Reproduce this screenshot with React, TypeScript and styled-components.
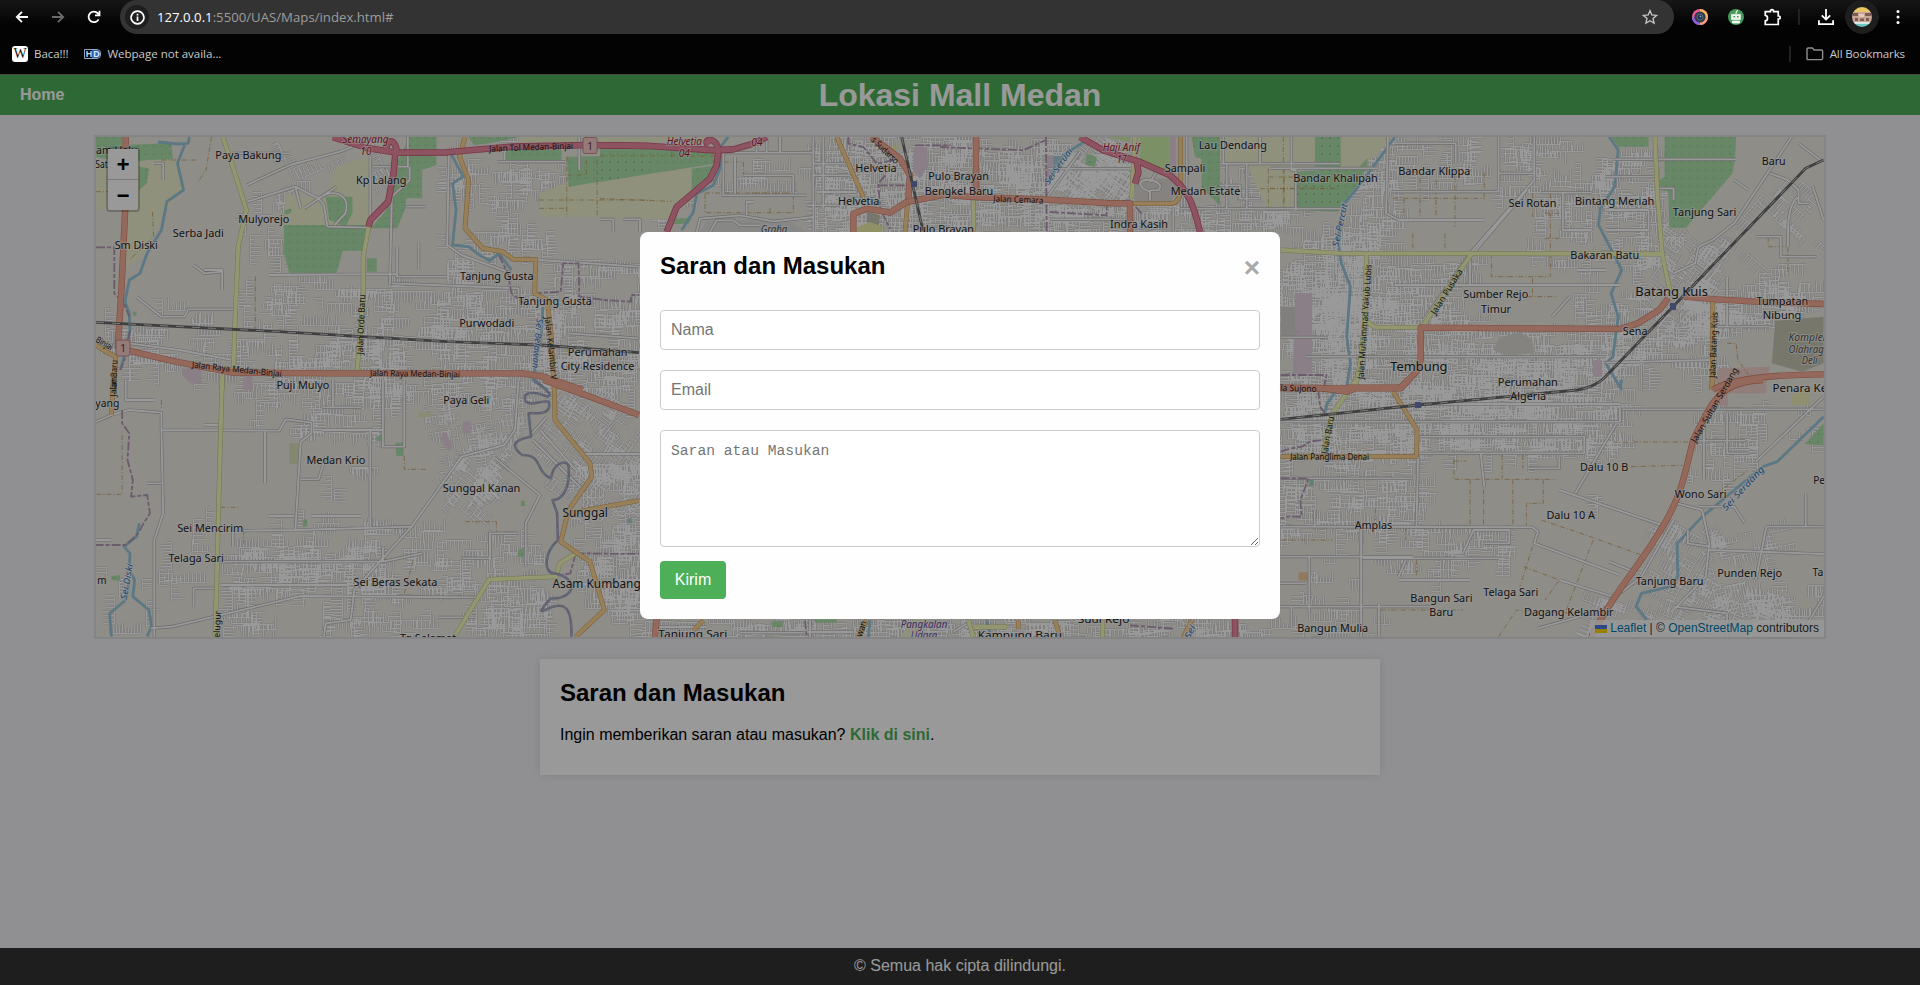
import React from "react";
import styled, { createGlobalStyle, css } from "styled-components";

const GlobalStyle = createGlobalStyle`
  *, *::before, *::after { box-sizing: border-box; }
  body {
    margin: 0;
    font-family: Arial, "Liberation Sans", sans-serif;
    background: #f1f1f4;
    overflow: hidden;
  }
`;

/* ---------- browser bar ---------- */

const Window = styled.div`
  display: flex;
  flex-direction: column;
  height: 985px;
  width: 1920px;
`;

const Chrome = styled.div`
  height: 75px;
  flex: none;
  background: linear-gradient(#161616, #030303 24px);
  border-bottom: 1px solid #48484a;
  font-family: "Open Sans", "Noto Sans", sans-serif;
`;

const Toolbar = styled.div`
  display: flex;
  height: 34px;
  padding: 0 4px;
`;

const Slot = styled.div<{ $w?: number; $round?: boolean }>`
  display: flex;
  align-items: center;
  justify-content: center;
  width: ${(p) => p.$w ?? 36}px;
  height: 34px;
  ${(p) =>
    p.$round &&
    css`
      background: radial-gradient(circle, #1e1e1e 16.5px, transparent 17px);
    `}
`;

const Omnibox = styled.div`
  display: flex;
  align-items: center;
  width: 1554px;
  height: 34px;
  margin: 0 8px;
  padding: 0 12px 0 5px;
  border-radius: 17px;
  background: #333;
`;

const InfoBadge = styled.span`
  display: flex;
  width: 24px;
  height: 24px;
  border-radius: 50%;
  align-items: center;
  justify-content: center;
  background: #1f1f1f;
`;

const Url = styled.span`
  flex: 1;
  margin-left: 8px;
  color: #9c9c9c;
  font-size: 13.2px;
  letter-spacing: 0;
  line-height: 32px;
  b { color: #fff; font-weight: 400; }
`;

const Divider = styled.i`
  width: 2px;
  height: 16px;
  background: #222;
`;

const Bookmarks = styled.div`
  display: flex;
  align-items: center;
  height: 39px;
  padding: 0 15px 0 12px;
  color: #c9c9c9;
  font-size: 11.6px;
`;

const Bookmark = styled.span<{ $gap?: number; $spacing?: number }>`
  display: flex;
  align-items: center;
  gap: 6px;
  margin-right: ${(p) => p.$gap ?? 0}px;
  letter-spacing: ${(p) => p.$spacing ?? 0}px;
  white-space: nowrap;
`;

const Grow = styled.span`
  flex: 1;
`;

const WikiIcon = styled.span`
  width: 16px;
  height: 16px;
  border-radius: 3px;
  background: #fff;
  color: #111;
  font: 14px/16px "Liberation Serif", serif;
  text-align: center;
`;

const HdIcon = styled.span`
  display: flex;
  height: 10px;
  font: bold 9px/9px "Liberation Sans", sans-serif;
  letter-spacing: 0;
  border: 1px solid #8fa9c9;
  border-radius: 0 4px 4px 0;
  b { background: #2f62b8; color: #dfeaff; width: 8px; text-align: center; border-radius: 0 4px 4px 0; }
  span { color: #cfd6e0; width: 7px; text-align: center; }
`;

/* ---------- page ---------- */

const Page = styled.div`
  position: relative;
  display: flex;
  flex-direction: column;
  flex: 1;
  background: #f1f1f4;
`;

const Header = styled.header`
  display: grid;
  grid-template-columns: 1fr auto 1fr;
  align-items: center;
  height: 40px;
  padding: 0 20px;
  background: #4eaf59;
  color: #fff;
  a { font-size: 16px; font-weight: bold; }
  h1 { margin: 0; font-size: 32px; line-height: 37px; }
`;

const MapFrame = styled.div`
  position: relative;
  width: 1732px;
  height: 504px;
  margin: 20px auto;
  border: 2px solid #dcdcdc;
  overflow: hidden;
  svg { display: block; }
`;

const ZoomControl = styled.div`
  position: absolute;
  left: 10px;
  top: 10px;
  width: 34px;
  border: 2px solid rgba(0, 0, 0, 0.22);
  border-radius: 4px;
  background-clip: padding-box;
`;

const ZoomButton = styled.div`
  height: 30px;
  background: #fff;
  color: #000;
  font: bold 22px/35px "Liberation Mono", monospace;
  text-align: center;
  border-radius: 0 0 2px 2px;
  & + & { border-top: 1px solid #ccc; height: 31px; }
`;

const Attribution = styled.div`
  position: absolute;
  right: 0;
  bottom: 0;
  display: flex;
  align-items: center;
  gap: 3px;
  height: 17px;
  padding: 0 5px;
  background: rgba(255, 255, 255, 0.8);
  font-size: 12px;
  line-height: 17px;
  color: #333;
  white-space: pre;
  a { color: #0078a8; }
`;

const Flag = styled.i`
  width: 12px;
  height: 8px;
  background: linear-gradient(#4c7be1 50%, #ffd500 50%);
`;

const Card = styled.section`
  width: 840px;
  height: 116px;
  margin: 0 auto;
  padding: 20px;
  background: #fff;
  box-shadow: 0 0 10px rgba(0, 0, 0, 0.1);
  p { margin: 20px 0 0; font-size: 16px; line-height: 18px; }
  a { color: #4eaf59; font-weight: bold; }
`;

const Heading = styled.h2`
  margin: 0;
  font-size: 24px;
  line-height: 27px;
`;

const Footer = styled.footer`
  height: 37px;
  margin-top: auto;
  background: #333;
  color: #fff;
  text-align: center;
  font-size: 16px;
  line-height: 36px;
`;

const Overlay = styled.div`
  position: absolute;
  inset: 0;
  padding-top: 157px;
  background: rgba(0, 0, 0, 0.4);
`;

const Modal = styled.div`
  display: flex;
  flex-direction: column;
  width: 640px;
  height: 387px;
  margin: 0 auto;
  padding: 20px;
  border-radius: 8px;
  background: #fefefe;
`;

const ModalTop = styled.div`
  display: flex;
  justify-content: space-between;
  height: 58px;
`;

const Close = styled.span`
  color: #aaa;
  font-size: 28px;
  font-weight: bold;
  line-height: 32px;
`;

const fieldStyle = css`
  display: block;
  width: 100%;
  padding: 10px;
  border: 1px solid #ccc;
  border-radius: 4px;
  background: #fff;
  outline: none;
  margin: 0;
  &::placeholder { color: #757575; opacity: 1; }
`;

const Field = styled.input`
  ${fieldStyle}
  height: 40px;
  margin-bottom: 20px;
  padding-bottom: 11px;
  font: 16px Arial, "Liberation Sans", sans-serif;
`;

const Message = styled.textarea`
  ${fieldStyle}
  height: 117px;
  flex: none;
  padding-top: 11px;
  font: 14.67px/19px "Liberation Mono", monospace;
  resize: vertical;
`;

const Submit = styled.button`
  width: 66px;
  height: 38px;
  margin-top: 14px;
  border: 0;
  border-radius: 4px;
  background: #4eaf59;
  color: #fff;
  font: 16px Arial, "Liberation Sans", sans-serif;
  padding: 0 0 1px;
`;

/* ---------- map ---------- */

type Kind = "white" | "trunk" | "motorway" | "primary" | "secondary" | "river" | "boundary" | "rail" | "track";

/* Each survey sheet has its own origin and scale within the map's drawing space. */
type Sheet = {
  ox: number;
  oy: number;
  sx: number;
  fills: [string, string][];
  lines: Partial<Record<Kind, string>>;
  labels: [string, number, number, number, string?][];
  roads: [string, number, number, number, number, string?][];
};

const FOREST = "#ace1aa";
const FARM = "#eef2cf";
const PINK = "#e6d3e2";

const sheets: Sheet[] = [
  {
    ox: 90, oy: 130, sx: 1 / 2.8,
    fills: [
      [FARM, "17,100 250,88 262,180 205,250 170,350 120,400 98,410 98,240 17,240"],
      [FARM, "690,110 780,80 782,290 545,285 545,190 600,205 655,200"],
      [FARM, "895,110 930,120 930,205 885,205"],
      [FARM, "1090,95 1335,95 1568,90 1568,262 1257,262 1257,190 1335,160 1335,95"],
      [FARM, "1200,21 1568,21 1568,40 1200,45"],
      [FOREST, "17,21 90,21 90,45 228,40 232,88 160,90 95,100 17,80"],
      [FOREST, "137,110 165,115 160,160 137,180"],
      [FOREST, "543,285 775,285 770,362 708,362 690,430 558,428 543,370"],
      [FOREST, "660,200 735,200 735,250 715,290 670,270"],
      [FOREST, "855,110 895,21 970,21 970,105 930,120 930,205 885,205 885,230 860,295 785,295 830,240"],
      [FOREST, "775,385 803,385 803,425 775,425"],
      [FOREST, "545,240 565,236 562,250 545,254"],
      [FOREST, "1060,21 1200,21 1120,40 1075,45"],
      [FOREST, "1165,60 1320,60 1320,95 1165,95"],
      [FOREST, "1335,80 1568,75 1568,130 1340,170"],
      [FOREST, "120,545 130,545 130,557 120,557"],
      [PINK, "258,715 312,715 312,760 280,760 258,735"],
      [PINK, "430,740 455,740 455,780 430,780"],
    ],
    lines: {
      white: "M440,215 L575,170 640,205 655,225 665,290 780,293 M440,165 L560,105 700,65 800,21 M575,170 L590,235 M600,235 L690,170 M640,205 C690,170 730,200 715,250 L685,285 M785,295 V80 M790,110 H890 V21 M840,460 L845,200 895,150 895,110 M500,435 L860,432 M845,460 L1200,475 1200,550 M130,500 L200,560 265,560 275,538 400,538 M1005,60 L1000,350 M320,420 H370 V480 M400,70 H560 M1000,345 L1040,375 1180,430 M1257,390 L1537,410 M1370,120 V20 M1140,95 H1330 M860,350 V440 H1000 M920,335 V420 M885,230 H940 M180,100 H205 V150 M110,640 L250,660 400,690 M290,405 L320,430 370,425 M1340,610 L1537,625",
      river: "M190,36 L245,42 275,40 278,21 M265,45 L245,100 262,180 215,215 200,300 160,370 140,430 110,450 98,515 110,550 112,600 100,660 85,720 M1005,60 L1030,110 1045,140 1015,160 1025,240 1015,345 1060,350 1090,375 1120,392 1145,370 1180,420 M1268,530 L1265,600 1240,750 1280,780",
      boundary: "M17,352 L68,352 68,490 95,520 110,560 M1145,375 L1170,430 1180,490 1215,520 M1240,490 L1318,485 1325,400 1368,400 1370,500 1440,510 1515,515 1515,495 1537,495 M112,600 L100,680 85,720",
      track: "M340,21 L325,120 300,160 M175,245 L178,320 110,390 M200,90 H300 M463,440 V600 M1257,210 H1568 M1335,80 V262 M1420,90 V262 M1335,135 H1390 V90 M1257,235 H1335 M17,185 H60",
      secondary: "M372,21 L400,110 438,240 415,350 405,600 402,715 M370,735 V780 M780,290 L765,380 765,500 748,720",
      primary: "M1050,21 L1035,80 1060,150 1050,295 1100,355 1155,365 1185,388 1248,388 1245,490 1280,510 1290,600 1300,780 M17,645 L45,665 72,680 65,780",
      trunk: "M100,21 L98,250 88,480 78,650 120,665 200,685 240,695 400,728 700,730 1210,730 1270,740 1380,780",
      motorway: "M680,21 L780,55 860,68 1000,67 1180,50 1400,45 1568,48 M855,70 L850,130 835,215 785,270 780,290 M830,70 C825,25 855,20 860,68",
      rail: "M17,577 L530,605 1000,635 1260,645 1537,668",
    },
    labels: [
      ["am Helu", 17, 133, 73], ["Sat", 15, 50, 115],
      ["Paya Bakung", 351, 536, 87], ["Kp Lalang", 745, 886, 162], ["Mulyorejo", 415, 558, 278],
      ["Serba Jadi", 232, 375, 320], ["Sm Diski", 69, 190, 356], ["Tanjung Gusta", 1036, 1242, 451],
      ["Tanjung Gusta", 1199, 1405, 524], ["Purwodadi", 1034, 1188, 590], ["Perumahan", 1338, 1505, 677],
      ["City Residence", 1318, 1524, 720], ["Puji Mulyo", 522, 670, 776],
      ["Semayang", 706, 836, 38, "exit"], ["10", 757, 788, 74, "exit"],
    ],
    roads: [
      ["Jalan Tol Medan-Binjai", 1235, 52, -2, 84], ["Jalan Orde Baru", 759, 583, -88, 60],
      ["Jalan Raya Medan-Binjai", 411, 718, 6, 90], ["Jalan Raya Medan-Binjai", 910, 731, 1, 90],
      ["Jalan Kelambir V", 1291, 655, 84, 63], ["Sei Belawan", 1253, 640, 95, 50, "water"],
      ["Binjai", 40, 640, 30, 18], ["lan Baru", 67, 735, -88, 30],
    ],
  },
  {
    ox: 90, oy: 380, sx: 1 / 2.8,
    fills: [
      [FOREST, "802,168 816,168 816,183 802,183"], [FOREST, "855,188 878,188 878,228 858,228"],
      [FOREST, "596,418 608,418 608,440 596,440"], [FOREST, "1198,512 1218,500 1218,532 1198,530"],
      [FOREST, "60,588 84,586 84,602 60,600"], [FOREST, "1207,362 1218,362 1218,378 1207,378"],
      ["#dce3bb", "558,190 584,190 584,252 558,252"], ["#e4e8c4", "918,95 955,95 955,112 918,112"],
      [PINK, "985,155 1000,160 1015,200 1005,215 985,185"], [PINK, "1045,125 1066,125 1066,160 1045,160"],
      ["#a8cfd6", "1505,415 1517,415 1517,430 1505,430"],
    ],
    lines: {
      white: "M17,125 L60,105 110,90 200,98 200,150 530,152 548,118 620,128 620,160 590,185 575,450 M430,452 L575,450 900,440 1040,230 1160,195 1190,150 1200,0 M1135,235 L1260,345 1220,430 1220,560 M900,440 L740,630 730,720 660,730 655,770 M170,745 L230,740 590,648 1080,652 M200,150 L205,400 180,480 180,770 M490,155 V310 M820,0 V200 H880 V0 M785,150 V440 M650,150 H820 M365,545 H820 M365,615 H720 M1380,222 H1537 M650,82 H760 M0,480 H60 M100,0 V60 H180 M590,298 H640 L660,230 M500,408 H570 M620,408 H760 M680,80 V0 M400,450 V500 M290,680 V625 H350 M820,500 V545 L930,520 M975,712 H1080 M1040,535 H1120 M1120,540 V460 H1200 M1240,180 L1380,330 M1260,150 L1360,270 M1230,170 L1280,110 M160,310 H200 M320,135 H360",
      river: "M138,430 L130,470 95,500 112,520 110,570 125,600 120,650 165,690 172,740 160,770 M110,600 L100,660 55,700 60,770",
      boundary: "M90,90 L90,130 110,160 105,240 120,300 115,350 160,345 168,400 150,430 135,460 100,495 17,495 M1360,520 L1537,522 M1360,520 L1345,580 1320,585",
      track: "M90,165 V343 H17 M365,382 H415 M430,450 V490 M880,228 V268 H945 M1050,425 H1138 V460 M905,540 L880,640 M200,60 V90",
      secondary: "M370,0 L362,300 355,600 350,770 M1020,770 L1118,598 1305,590 1315,550 1360,520",
      primary: "M1300,0 L1302,120 1400,250 1405,290 1340,390 1318,485 1400,545 1440,690 1390,740 1360,770 M1345,400 L1400,388 1537,362 M65,0 L60,105",
      trunk: "M1270,0 L1400,50 1537,105",
    },
    labels: [
      ["yang", 15, 82, 82], ["Paya Geli", 989, 1118, 71], ["Medan Krio", 606, 771, 253],
      ["Sunggal Kanan", 988, 1205, 336], ["Sunggal", 1323, 1450, 412, "town"], ["Sei Mencirim", 244, 429, 455],
      ["Telaga Sari", 220, 375, 545], ["Sei Beras Sekata", 738, 973, 619], ["Asam Kumbang", 1295, 1542, 625, "town"],
      ["Tg Selamat", 868, 1025, 785], ["m", 20, 46, 611],
    ],
    roads: [["Jalan", 66, 20, -88, 20], ["Selugur", 356, 740, -88, 32], ["Sei Diski", 103, 605, -80, 36, "water"]],
  },
  {
    ox: 1270, oy: 130, sx: 1 / 2.8,
    fills: [
      [FARM, "0,21 60,21 60,110 72,115 72,240 0,235"], [FARM, "198,21 345,21 290,80 250,110 198,110"],
      [FOREST, "125,21 198,21 198,110 125,110"], [FOREST, "72,125 270,115 245,165 188,245 72,240"], [FOREST, "250,110 273,85 273,110"],
      [FOREST, "955,21 1060,21 1060,50 975,50"],
      [FOREST, "1105,21 1305,21 1302,90 1295,130 1165,293 1118,293 1115,185 1090,180 1090,150 1105,140"],
      [PINK, "70,490 118,490 118,730 65,735"], ["#d8d4d2", "30,530 70,530 70,600 85,600 65,622 30,622"],
      ["#c9c7b3", "1415,572 1550,560 1550,700 1490,725 1405,700"], ["#f2d0cb", "1255,715 1400,710 1390,750 1255,770"],
      [PINK, "905,690 930,690 930,740 905,740"], ["#dedad6", "640,625 700,605 735,630 740,670 660,678 625,660"],
    ],
    lines: {
      white: "M1460,21 L1300,280 1240,330 1200,350 1190,400 1130,430 M740,21 V150 L560,370 430,570 M720,180 L545,400 M0,115 H300 M330,21 L325,250 360,270 600,270 M965,88 H1305 M940,698 L1230,690 M100,680 H940 M30,622 H160 M350,40 H520 V100 M340,185 H640 V21 M640,130 H740 M820,190 V300 H900 M760,188 H900 M1090,175 H1130 V210 M1400,130 L1450,150 1480,180 M1480,180 V220 H1510 M1360,320 H1430 V380 H1530 M1480,200 C1450,220 1450,280 1450,350 M350,465 H980 M560,370 V465 M1040,690 V780 M790,560 L840,500 M60,21 V120 H72 V240 M1260,590 H1400 M1280,440 V590 M1480,40 L1540,90 M1520,170 L1550,270 M1340,180 L1300,150 M940,140 H1070 M940,240 H1060 V300 H940 M860,420 H940",
      river: "M350,21 L310,80 240,180 205,225 190,330 200,400 225,470 215,620 225,700 215,770 M950,21 L975,60 965,170 925,235 920,285 985,420 955,490 975,560 960,680 940,700 985,780",
      track: "M345,205 H600 M375,205 V265 M420,145 V260 M465,150 V260 M518,135 V290 M600,128 V210 M735,190 V260 M785,190 V440 M620,370 V440 H780 M490,310 V360 M400,310 V360 M735,445 V500 M0,175 H180 M40,110 V235 M720,500 H805 M770,250 H810 M770,325 H810 M1280,640 H1305 L1310,690 1340,735 M1395,320 V350 H1450 V440",
      boundary: "M30,735 H158 L150,780",
      secondary: "M30,360 L200,370 560,370 1095,372 M270,370 L265,570 295,592 425,592 565,370 M265,570 L255,680 240,770 M1078,21 L1085,200 1098,370 1120,485",
      primary: "M1240,510 L1238,780",
      trunk: "M30,775 H215 M215,773 H365 L410,725 422,690 422,593 980,597 1030,580 1090,540 1115,505 M1160,500 L1250,508 1360,515 1550,522 M1240,780 Q1300,735 1550,733",
      rail: "M1550,90 L1500,115 1128,530 935,745",
    },
    labels: [
      ["Bandar Khalipah", 65, 302, 156], ["Bandar Klippa", 359, 561, 136], ["Sei Rotan", 668, 802, 231],
      ["Bintang Meriah", 854, 1076, 225], ["Tanjung Sari", 1128, 1306, 257], ["Baru", 1377, 1444, 104],
      ["Bakaran Batu", 841, 1034, 386], ["Batang Kuis", 1023, 1226, 499, "town"], ["Sumber Rejo", 541, 723, 505],
      ["Timur", 591, 675, 548], ["Tumpatan", 1362, 1507, 525], ["Nibung", 1380, 1488, 568], ["Sena", 988, 1057, 614],
      ["Tembung", 337, 497, 722, "town"], ["Perumahan", 638, 806, 768],
      ["Komplek", 1452, 1562, 632, "area"], ["Olahraga", 1452, 1566, 668, "area"], ["Deli", 1489, 1533, 702, "area"],
    ],
    roads: [
      ["Sei Percut", 196, 285, -78, 44, "water"], ["Jalan Muhammad Yakub Lubis", 265, 575, -86, 115],
      ["Jalan Pusaka", 495, 485, -58, 52], ["Jalan Batang Kuis", 1242, 645, -88, 66],
    ],
  },
  {
    ox: 1270, oy: 380, sx: 1 / 2.8,
    fills: [
      [FOREST, "1497,192 1550,130 1550,196"], ["#f2d0cb", "1255,0 1390,0 1390,40 1282,40 1282,78 1250,75"],
      ["#f0efb9", "1460,55 1480,25 1510,25 1508,76 1460,74"], ["#f3c999", "80,577 107,577 107,601 80,601"],
      ["#9ed8bb", "110,300 122,300 122,318 110,318"],
    ],
    lines: {
      white: "M415,220 L410,440 M30,125 H980 V85 M985,88 H1550 M410,72 H980 M30,440 L735,442 750,455 740,490 980,585 M255,440 V770 M810,330 L1110,440 M855,340 L970,130 M1140,370 L1210,390 1230,490 1220,590 1130,690 M1230,510 L1550,522 M1360,245 L1550,50 M1390,440 H1550 M30,530 H400 M260,535 H640 M360,600 H560 M0,680 H450 M1215,100 V300 M1200,182 H1330 M1130,420 L1040,590 980,640 M1280,100 V220 H1340 M415,170 H880 V220 H415 M590,220 L600,320 M720,265 H810 V230 M30,295 H400 M125,390 V440 M540,520 L570,450 H670 V490 H600 M1170,450 V490 L1230,500 M1200,380 H1300 L1330,430 M1500,340 V440 M1390,440 L1360,600 M1130,680 L1280,700 M1280,700 V770 M1550,650 L1500,740 M0,610 H100 M110,530 V700 M305,670 V770 M810,600 L960,650 M60,680 V740 M380,540 L360,590 M950,545 L1030,580 M750,745 L900,700",
      river: "M985,0 L980,25 M1550,110 L1420,245 1380,260 1210,410 1140,490 1142,590 1120,620 1040,640 1025,680 1055,720 M155,95 L160,70 180,40 210,30",
      boundary: "M135,30 L140,80 155,100 M30,215 L60,205 90,200 110,185 145,180 M30,295 H108 L85,360 88,410 50,410 30,415",
      track: "M515,240 V298 H800 M560,298 V436 M598,298 V436 M680,298 V436 M765,298 V370 H718 V436 M650,225 V295 M708,225 V265 M515,243 H550 M960,186 H1175 M1010,260 L1155,256 M760,420 L870,460 1040,525 M735,500 L700,620 M905,480 L830,690 M710,560 L810,600 770,660 M640,770 L690,690 850,700 M310,690 H540 M30,480 H175 M410,540 V590 M1250,340 L1340,270 M295,385 V420 M380,440 V480",
      secondary: "M240,0 L215,40 175,100 150,215",
      primary: "M345,35 L412,150 410,230 30,230 M1240,0 L1235,30",
      trunk: "M0,22 L140,24 215,35 240,25 365,25 390,0 M1380,0 C1260,5 1240,60 1185,180 C1160,290 1150,340 1120,400 C1060,530 970,620 900,770",
      rail: "M30,118 L415,75 860,30 C890,25 915,15 935,-5",
    },
    labels: [
      ["Algeria", 673, 773, 61], ["Penara Keb", 1407, 1580, 36], ["Dalu 10 B", 868, 1003, 272], ["Wono Sari", 1133, 1278, 355],
      ["Dalu 10 A", 774, 910, 416], ["Amplas", 237, 342, 446], ["Punden Rejo", 1252, 1434, 591], ["Tanjung Baru", 1024, 1214, 615],
      ["Telaga Sari", 597, 751, 647], ["Bangun Sari", 393, 567, 665], ["Baru", 446, 513, 707], ["Dagang Kelambir", 711, 962, 709],
      ["Bangun Mulia", 76, 275, 756], ["Pe", 1521, 1554, 313], ["Ta", 1519, 1549, 587],
    ],
    roads: [
      ["la Sujono", 80, 25, 2, 36], ["Jalan Baru", 162, 165, -80, 38], ["Jalan Panglima Denai", 167, 231, 0, 79],
      ["Jalan Sultan Serdang", 1245, 75, -60, 85], ["Sei Serdang", 1325, 325, -47, 57, "water"],
    ],
  },
  {
    ox: 600, oy: 132, sx: 1 / 3,
    fills: [
      [FARM, "0,15 380,15 330,30 0,30"], [FARM, "0,60 275,100 290,190 215,262 0,262"], [FARM, "370,15 390,15 372,50"],
      [FOREST, "0,50 200,48 340,60 345,95 150,125 0,150"], [FOREST, "275,110 345,100 320,150 275,195"], [FOREST, "215,260 275,258 265,276 205,276"],
      ["#eeebe3", "315,180 580,185 580,242 315,242"], ["#e2e3e0", "320,265 560,262 620,300 300,300"],
      ["#c8c6b8", "800,238 840,250 835,290 800,270"], ["#eef0aa", "770,285 810,270 850,285 845,300 770,300"],
      [PINK, "940,45 980,45 985,100 960,140 940,120"], ["#eef0aa", "865,45 900,40 885,55"],
    ],
    lines: {
      white: "M370,62 V190 H620 M430,130 H580 V185 M370,62 H640 M405,75 V185 M500,62 V20 M540,60 V15 M470,60 V20 M290,300 L300,260 420,250 520,268 640,255 M440,250 V210 H460 M330,300 L350,265 400,265 420,280 480,280 M640,15 V300 M670,15 V230 M620,220 H720 M640,130 H750 M640,95 H745 M650,180 H770 M0,262 H40 V300 M70,262 H120 V300",
      river: "M385,15 L365,40 360,110 340,160 290,185 280,240 245,295 M540,278 L530,300",
      track: "M0,72 H360 M215,30 V80 M370,90 V180 M370,90 H430 V130 M315,183 H580 V242 H315 Z M455,183 H575 M0,200 L215,208 M510,242 V225",
      boundary: "M745,15 L745,35 790,45 815,75 830,95 880,85 M855,130 L835,155 840,220 845,240 M835,160 H925 M845,240 L870,290 M945,40 H1050",
      primary: "M710,15 L790,195 M915,300 L925,190",
      trunk: "M815,15 L900,80 930,130 925,200 M760,300 V245 L800,230 870,242 920,210 1050,185",
      motorway: "M0,40 L150,42 345,55 400,52 460,35 500,15 M355,55 L350,100 330,140 230,225 200,300 M355,55 C350,12 305,20 325,40",
      rail: "M905,15 L970,300",
    },
    labels: [
      ["Helvetia", 200, 306, 38, "exit"], ["04", 236, 270, 74, "exit"], ["04", 454, 488, 43, "exit"],
      ["Helvetia", 766, 890, 120], ["Helvetia", 714, 838, 220], ["Pulo Brayan", 985, 1167, 145], ["Bengkel Baru", 974, 1180, 188],
      ["Pulo Brayan", 938, 1122, 302], ["Graha", 482, 562, 302, "area"],
    ],
    roads: [["s Sudarso", 855, 55, 44, 34]],
  },
  {
    ox: 940, oy: 132, sx: 1 / 3,
    fills: [
      [FARM, "840,15 1125,15 1125,100 1070,110 1070,235 980,225 920,100 840,95"],
      ["#cdf0a8", "600,15 690,15 690,122 600,85"], ["#cdf0a8", "500,15 570,15 570,30"],
      [PINK, "690,15 708,15 708,130 690,120"], [PINK, "320,70 342,70 342,115 320,150"],
      ["#a8cfd6", "340,72 370,72 345,108 340,105"], [FOREST, "440,65 470,75 465,105 435,98"],
      [FOREST, "755,15 840,15 840,220 785,170 785,80 765,75"], [FOREST, "1125,15 1200,15 1200,110 1125,100"],
      [FOREST, "1070,120 1200,110 1200,235 1070,235"], ["#ded9d5", "585,140 690,140 720,170 690,208 585,208"],
    ],
    lines: {
      white: "M630,205 V175 H655 C680,150 610,130 600,155 L610,170 630,180 M650,120 L630,150 M325,110 H570 M325,190 L420,60 M440,110 H570 M840,95 H1200 M860,95 V230 M960,95 V15 M840,160 H900 V200 H960 M330,262 H560 M700,225 V300 M720,230 H1200 M560,60 H470 M740,15 V180 M850,15 V95 M920,95 V230",
      river: "M440,25 L400,50 370,70 325,150",
      track: "M985,110 V225 M1030,110 V230 M985,135 H1070 M960,170 H1200 M1030,15 V110",
      boundary: "M0,45 L250,55 315,25 M318,15 L320,300 M330,240 L500,250 500,210 570,205 605,245",
      secondary: "M585,15 L575,200 M100,200 V300",
      primary: "M722,15 V180 Q715,215 690,215 H580",
      trunk: "M108,15 V190 M0,188 L100,195 320,203 500,213 570,215 V300",
      motorway: "M420,15 L490,55 600,90 690,130 C740,170 760,210 780,300 M590,85 L595,120 585,155",
    },
    labels: [
      ["Lau Dendang", 776, 981, 52], ["Sampali", 674, 796, 119], ["Medan Estate", 692, 901, 190], ["Indra Kasih", 510, 684, 288],
      ["Haji Anif", 488, 600, 58, "exit"], ["17", 530, 560, 93, "exit"],
    ],
    roads: [["Jalan Cemara", 235, 203, 2, 50], ["Sei Seruai", 355, 103, -55, 42, "water"]],
  },
  {
    ox: 640, oy: 612, sx: 1 / 3,
    fills: [[FOREST, "395,28 428,28 428,45 395,45"], [FOREST, "525,22 590,22 590,32 525,32"], [FARM, "780,75 820,22 870,22 830,75"]],
    lines: {
      white: "M500,60 H640 M300,62 H490 M940,60 L980,35 M510,25 V75 M60,45 H200",
      boundary: "M495,25 L500,75 M1470,40 L1600,50",
      secondary: "M985,25 L1000,75 M1000,45 H1100 M1388,25 V75",
      primary: "M190,25 L160,55 M680,25 L655,75 M1135,25 V50 M1245,25 L1260,75 M1655,25 L1630,75",
      trunk: "M50,20 L45,75",
      motorway: "M1785,20 V75",
      river: "M690,25 L685,75 M1040,25 L1050,60",
    },
    labels: [
      ["Tanjung Sari", 55, 262, 77], ["Kampung Baru", 1013, 1266, 80], ["Sudi Rejo", 1313, 1468, 34],
      ["Pangkalan", 782, 922, 47, "air"], ["Udara", 812, 892, 80, "air"],
    ],
    roads: [["wan", 664, 50, -72, 16], ["Sei", 1650, 60, -65, 14, "water"]],
  },
];

/* Small residential streets: spines with perpendicular side streets. */
const districts: [number, number, number, number, number, number?][] = [
  [98, 290, 130, 85, 18], [125, 320, 100, 60, 16], [230, 285, 170, 115, 90], [350, 285, 200, 115, 110], [430, 290, 225, 100, 90],
  [245, 180, 60, 110, 16], [270, 140, 110, 60, 16, -25], [440, 150, 40, 130, 30], [490, 165, 60, 90, 32], [475, 135, 90, 60, 14],
  [545, 260, 95, 120, 60], [250, 380, 140, 50, 30], [295, 420, 60, 70, 9], [420, 390, 100, 70, 34, -8], [440, 455, 50, 60, 30, -50],
  [220, 545, 145, 45, 80], [350, 525, 120, 70, 40], [460, 530, 80, 100, 36], [540, 390, 100, 120, 66, 35], [570, 460, 70, 160, 90],
  [100, 560, 80, 75, 10], [160, 500, 60, 60, 4], [200, 600, 60, 35, 8], [320, 595, 110, 40, 18], [480, 600, 70, 35, 26],
  [280, 510, 90, 30, 10], [330, 560, 60, 30, 9],
  [640, 137, 170, 95, 22], [813, 137, 140, 95, 170], [940, 137, 110, 95, 120], [1050, 150, 80, 55, 80, -55], [1040, 205, 150, 27, 56],
  [1190, 205, 90, 30, 20], [1200, 137, 130, 90, 28], [1280, 235, 85, 150, 150], [1340, 137, 50, 120, 60], [1370, 137, 170, 50, 40],
  [1280, 255, 70, 60, 40], [1365, 260, 100, 80, 70], [1420, 330, 200, 50, 80], [1310, 290, 90, 100, 80],
  [1400, 345, 210, 50, 80], [1280, 385, 130, 70, 120], [1400, 385, 215, 66, 200], [1280, 460, 140, 75, 75], [1360, 520, 100, 60, 22],
  [1450, 525, 60, 30, 14], [1290, 560, 90, 75, 14], [1490, 137, 130, 70, 34], [1520, 190, 100, 80, 26], [1600, 137, 60, 180, 50],
  [1655, 220, 70, 110, 60, 35], [1690, 280, 110, 40, 40], [1720, 180, 100, 80, 14, 40], [1750, 260, 70, 60, 20], [1560, 290, 70, 90, 30],
  [1605, 320, 100, 50, 30], [1670, 300, 50, 80, 24], [1680, 400, 60, 80, 18], [1730, 400, 90, 50, 14], [1640, 520, 70, 80, 30, 28],
  [1700, 530, 70, 90, 40, -12], [1660, 590, 120, 40, 18, 20], [1580, 590, 90, 40, 14, 20], [1740, 580, 80, 55, 14], [1590, 440, 25, 60, 4],
  [642, 618, 600, 20, 130], [1240, 620, 90, 17, 8],
];

function buildStreets(): string {
  let seed = 48271;
  const rnd = () => {
    seed = (seed * 16807) % 2147483647;
    return seed / 2147483647;
  };
  const out: string[] = [];
  for (const [x, y, w, h, count, angle = 0] of districts) {
    const a = (angle * Math.PI) / 180;
    for (let i = 0; i < count; i++) {
      const px = Math.round(x + rnd() * w) + 0.5;
      const py = Math.round(y + rnd() * h) + 0.5;
      const flip = rnd() < 0.4 ? Math.PI / 2 : 0;
      const ux = Math.cos(a + flip);
      const uy = Math.sin(a + flip);
      const len = 9 + Math.round(rnd() * 22);
      const side = rnd() < 0.5 ? 1 : -1;
      out.push(`M${px},${py}l${(ux * len).toFixed(1)},${(uy * len).toFixed(1)}`);
      const step = 3 + Math.round(rnd() * 2);
      for (let t = 0; t <= len; t += step) {
        const tooth = (4 + Math.round(rnd() * 9)) * side;
        out.push(`M${(px + ux * t).toFixed(1)},${(py + uy * t).toFixed(1)}l${(-uy * tooth).toFixed(1)},${(ux * tooth).toFixed(1)}`);
      }
    }
  }
  return out.join("");
}

const streets = buildStreets();

const strokes: Record<Kind, { casing?: string; wide?: number; color: string; width: number; dash?: string }> = {
  river: { color: "#98c9dc", width: 2.8 },
  track: { color: "#c4a060", width: 0.8, dash: "5 2 1 2" },
  white: { casing: "#b4b2b2", wide: 3.2, color: "#ffffff", width: 1.9 },
  boundary: { color: "#b398b4", width: 1.8, dash: "9 2 4 2" },
  secondary: { casing: "#bcc28a", wide: 4.8, color: "#f6fbb8", width: 3.8 },
  primary: { casing: "#c79d5c", wide: 4.8, color: "#fcd495", width: 3.8 },
  trunk: { casing: "#cf7f68", wide: 6.4, color: "#f9ae99", width: 5.2 },
  motorway: { casing: "#c95a78", wide: 6.6, color: "#ec8ba0", width: 5 },
  rail: { casing: "#6a6a6a", wide: 2.8, color: "#c9c9c9", width: 1, dash: "8 8" },
};

const order: Kind[] = ["river", "track", "white", "boundary", "secondary", "primary", "trunk", "motorway", "rail"];

const MapText = styled.text<{ $kind?: string }>`
  font-family: "Noto Sans", sans-serif;
  font-size: ${(p) => (p.$kind === "town" ? 12.6 : p.$kind === "road" || p.$kind === "water" ? 8.8 : 11.4)}px;
  font-style: ${(p) => (["exit", "area", "air", "water"].includes(p.$kind ?? "") ? "italic" : "normal")};
  fill: ${(p) => ({ exit: "#a8202c", water: "#3a76b8", air: "#6c4a9c", area: "#555" } as Record<string, string>)[p.$kind ?? ""] ?? "#222"};
  stroke: ${(p) => (p.$kind === "road" ? "none" : "rgba(255,255,255,0.6)")};
  stroke-width: 2px;
  stroke-linejoin: round;
  paint-order: stroke;
`;

const Shield = ({ x, y }: { x: number; y: number }) => (
  <g>
    <rect x={x - 7} y={y - 8} width={14} height={16} rx={2} fill="#f6cdca" stroke="#c78a88" />
    <text x={x} y={y + 4} textAnchor="middle" fontSize={10} fontFamily="Noto Sans" fill="#6b2a2a">1</text>
  </g>
);

const CityMap = () => (
  <svg width={1728} height={500} viewBox="96 137 1728 500">
    <defs>
      <pattern id="trees" width="8" height="8" patternUnits="userSpaceOnUse">
        <circle cx="2" cy="2" r="0.55" fill="#6f9f6e" />
      </pattern>
    </defs>
    <rect x={96} y={137} width={1728} height={500} fill="#eeebe3" />
    <path d={streets} fill="none" stroke="#c4c2c0" strokeWidth={2.2} />
    <path d={streets} fill="none" stroke="#ffffff" strokeWidth={1.25} />
    {sheets.map((s, i) => (
      <g key={i} transform={`translate(${s.ox} ${s.oy}) scale(${s.sx} ${1 / 3})`}>
        {s.fills.map(([fill, points], j) => (
          <polygon key={j} points={points} fill={fill} />
        ))}
      </g>
    ))}
    {sheets.map((s, i) =>
      s.fills
        .filter(([fill]) => fill === FOREST)
        .map(([, points], j) => (
          <polygon
            key={`${i}-${j}`}
            fill="url(#trees)"
            points={points
              .split(" ")
              .map((p) => {
                const [x, y] = p.split(",").map(Number);
                return `${s.ox + x * s.sx},${s.oy + y / 3}`;
              })
              .join(" ")}
          />
        ))
    )}
    <g fill="none" strokeLinejoin="round">
      {order.map((kind) => {
        const st = strokes[kind];
        return (
          <g key={kind}>
            {[0, 1].map((pass) =>
              pass === 0 && !st.casing
                ? null
                : sheets.map((s, i) => (
                    <g key={`${pass}-${i}`} transform={`translate(${s.ox} ${s.oy}) scale(${s.sx} ${1 / 3})`}>
                      <path
                        d={s.lines[kind] ?? ""}
                        vectorEffect="non-scaling-stroke"
                        stroke={pass ? st.color : st.casing}
                        strokeWidth={pass ? st.width : st.wide}
                        strokeDasharray={pass ? st.dash : undefined}
                      />
                    </g>
                  ))
            )}
          </g>
        );
      })}
      <g transform={`translate(90 380) scale(${1 / 2.8} ${1 / 3})`}>
        {["#a3a0bd", "#9dbdcf"].map((c, i) => (
          <path
            key={c}
            vectorEffect="non-scaling-stroke"
            stroke={c}
            strokeWidth={i ? 1.2 : 2.6}
            strokeDasharray={i ? "4 6" : undefined}
            d="M1245,0 C1275,30 1300,45 1280,50 C1225,25 1210,45 1220,65 C1240,80 1260,60 1285,65 C1295,115 1230,95 1228,100 L1235,170 C1180,180 1180,200 1210,225 C1270,225 1245,275 1290,295 C1300,240 1340,240 1340,260 C1345,320 1325,360 1295,360 L1308,400 1310,480 C1270,520 1270,580 1300,580 C1380,600 1350,660 1290,655 C1260,690 1260,700 1275,690 C1330,660 1350,680 1348,770"
          />
        ))}
      </g>
    </g>
    <path d="M911,181h6v6h-6z M1670,303h6v7h-6z M1415,402h6v6h-6z" fill="#6f78b5" />
    {sheets.map((s, i) => (
      <g key={i}>
        {s.roads.map(([text, x, y, angle, length, kind], j) => (
          <MapText
            key={j}
            $kind={kind ?? "road"}
            textAnchor="middle"
            textLength={length}
            lengthAdjust="spacingAndGlyphs"
            transform={`translate(${s.ox + x * s.sx} ${s.oy + y / 3}) rotate(${angle})`}
            dy={3}
          >
            {text}
          </MapText>
        ))}
        {s.labels.map(([text, x0, x1, y, kind], j) => (
          <MapText
            key={j}
            $kind={kind}
            x={s.ox + x0 * s.sx}
            y={s.oy + y / 3}
            textLength={(x1 - x0) * s.sx}
            lengthAdjust="spacingAndGlyphs"
          >
            {text}
          </MapText>
        ))}
      </g>
    ))}
    <Shield x={590} y={145.5} />
    <Shield x={123} y={348} />
  </svg>
);

/* ---------- toolbar icons ---------- */

const Glyph = ({ d, color = "#fff", size = 16, width = 1.8 }: { d: string; color?: string; size?: number; width?: number }) => (
  <svg width={size} height={size} viewBox="0 0 16 16" fill="none" stroke={color} strokeWidth={width} overflow="visible">
    <path d={d} />
  </svg>
);

const BrowserChrome = () => (
  <Chrome>
    <Toolbar>
      <Slot><Glyph d="M14 8H3M8 2.8L2.8 8L8 13.2" /></Slot>
      <Slot><Glyph color="#6c6c6c" d="M2 8H13M8 2.8L13.2 8L8 13.2" /></Slot>
      <Slot><Glyph d="M12.6 10.3A5.3 5.3 0 1 1 11.9 4.4L13.3 6M13.5 1.8V6.4H9" /></Slot>
      <Omnibox>
        <InfoBadge><Glyph size={15} d="M8 1.2a6.8 6.8 0 1 0 .01 0M8 7v4.8M8 4.1v1.8" /></InfoBadge>
        <Url><b>127.0.0.1</b>:5500/UAS/Maps/index.html#</Url>
        <Slot $w={24}>
          <Glyph color="#c7c7c7" width={1.3} d="M8 1.6L9.8 6L14.6 6.4L11 9.5L12.1 14.2L8 11.7L3.9 14.2L5 9.5L1.4 6.4L6.2 6Z" />
        </Slot>
      </Omnibox>
      <Slot>
        <svg width="16" height="16" viewBox="0 0 16 16">
          <circle cx="8" cy="8" r="8" fill="#e85a96" />
          <path d="M8 0a8 8 0 0 1 8 8H8z" fill="#f7b45e" />
          <path d="M16 8a8 8 0 0 1-8 8V8z" fill="#f5a07a" />
          <path d="M8 16a8 8 0 0 1-8-8h8z" fill="#8a63e8" />
          <circle cx="8" cy="8" r="5.6" fill="#343b46" />
          <circle cx="8" cy="8" r="3" fill="#1d2f49" stroke="#5b6a80" />
          <circle cx="8.5" cy="7.5" r="1" fill="#6fa8dc" />
        </svg>
      </Slot>
      <Slot>
        <svg width="16" height="16" viewBox="0 0 16 16">
          <circle cx="8" cy="8" r="8" fill="#469a5c" />
          <path d="M8 5V2.6L10 1.2M3.6 5.4h8.8v5H3.6zM4.5 12h7v2h-7z" fill="#eef7ee" stroke="#eef7ee" strokeWidth=".8" />
          <path d="M5.4 7h1.6v1.6H5.4zM9 7h1.6v1.6H9z" fill="#469a5c" />
        </svg>
      </Slot>
      <Slot>
        <Glyph size={17} width={1.6} d="M1.2 2.4H6C6 -.1 9 -.1 9 2.4H13.4V6.6C15.9 6.6 15.9 9.6 13.4 9.6V14.6H1.2V11.2C4 10.8 4 6.4 1.2 6Z" />
      </Slot>
      <Slot $w={18}><Divider /></Slot>
      <Slot><Glyph d="M8 0V10.4M3.8 6.4L8 10.6L12.2 6.4M.9 11.2V15.1H15.1V11.2" /></Slot>
      <Slot $round>
        <svg width="20" height="20" viewBox="0 0 20 20">
          <clipPath id="face"><circle cx="10" cy="10" r="10" /></clipPath>
          <g clipPath="url(#face)">
            <path fill="#e9c765" d="M0 0h20v6H0z" />
            <path fill="#c9a595" d="M0 5h20v10H0z" />
            <path fill="#7d5c52" d="M1 6h5v3H1zM13 6h6v3h-6zM3 11h3v3H3zM8 11.5h4V14H8zM14 11h3v3h-3z" />
            <path fill="#e2c9b8" d="M7 7h5v3H7z" />
            <path fill="#d9e9e2" d="M0 15h20v2H0z" />
            <path fill="#6fc5bf" d="M0 17h20v3H0z" />
          </g>
        </svg>
      </Slot>
      <Slot>
        <svg width="4" height="16" viewBox="0 0 4 16" fill="#fff">
          <circle cx="2" cy="2.6" r="1.5" /><circle cx="2" cy="8" r="1.5" /><circle cx="2" cy="13.4" r="1.5" />
        </svg>
      </Slot>
    </Toolbar>
    <Bookmarks>
      <Bookmark $gap={16} $spacing={-0.1}><WikiIcon>W</WikiIcon>Baca!!!</Bookmark>
      <Bookmark $spacing={-0.05}><HdIcon><span>H</span><b>D</b></HdIcon>Webpage not availa...</Bookmark>
      <Grow />
      <Bookmark $gap={15}><Divider /></Bookmark>
      <Bookmark $spacing={-0.15}>
        <svg width="18" height="14" viewBox="0 0 18 14" fill="none" stroke="#8f8f8f" strokeWidth="1.4">
          <path d="M1 2.2Q1 1 2.2 1H6.4L8.2 3H15.6Q16.6 3 16.6 4V11.6Q16.6 12.6 15.6 12.6H2.2Q1 12.6 1 11.6Z" />
        </svg>
        All Bookmarks
      </Bookmark>
    </Bookmarks>
  </Chrome>
);

export default function App() {
  return (
    <Window>
      <GlobalStyle />
      <BrowserChrome />
      <Page>
        <Header>
          <a>Home</a>
          <h1>Lokasi Mall Medan</h1>
        </Header>
        <MapFrame>
          <CityMap />
          <ZoomControl>
            <ZoomButton>+</ZoomButton>
            <ZoomButton>−</ZoomButton>
          </ZoomControl>
          <Attribution>
            <Flag />
            <span><a>Leaflet</a> | © <a>OpenStreetMap</a> contributors</span>
          </Attribution>
        </MapFrame>
        <Card>
          <Heading>Saran dan Masukan</Heading>
          <p>Ingin memberikan saran atau masukan? <a>Klik di sini</a>.</p>
        </Card>
        <Footer>© Semua hak cipta dilindungi.</Footer>
        <Overlay>
          <Modal>
            <ModalTop>
              <Heading>Saran dan Masukan</Heading>
              <Close>×</Close>
            </ModalTop>
            <Field placeholder="Nama" />
            <Field placeholder="Email" />
            <Message placeholder="Saran atau Masukan" />
            <Submit>Kirim</Submit>
          </Modal>
        </Overlay>
      </Page>
    </Window>
  );
}
